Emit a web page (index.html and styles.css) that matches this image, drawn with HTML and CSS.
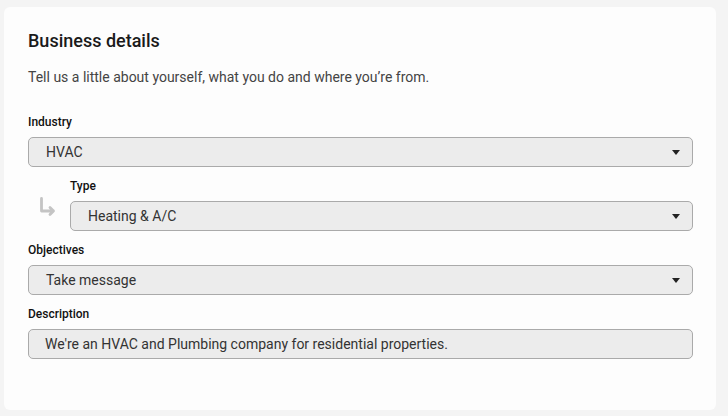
FILE: index.html
```html
<!DOCTYPE html>
<html lang="en">
<head>
    <meta charset="UTF-8">
    <meta name="viewport" content="width=device-width, initial-scale=1.0">
    <title>Business details</title>
    <link rel="stylesheet" href="styles.css">
</head>
<body>
    <div class="card">
        <h2>Business details</h2>
        <p class="intro">Tell us a little about yourself, what you do and where you’re from.</p>

        <div class="field">
            <label>Industry</label>
            <div class="select">HVAC <span class="caret"></span></div>
        </div>

        <div class="sub-row">
            <div class="sub-icon">
                <svg width="18" height="22" viewBox="0 0 18 22">
                    <path d="M3.5 1.5 V14 H15.5 M12 10.5 L15.5 14 L12 17.5" fill="none" stroke="#c4c4c4" stroke-width="2.8" stroke-linecap="round" stroke-linejoin="round"/>
                </svg>
            </div>
            <div class="field">
                <label>Type</label>
                <div class="select">Heating &amp; A/C <span class="caret"></span></div>
            </div>
        </div>

        <div class="field">
            <label>Objectives</label>
            <div class="select">Take message <span class="caret"></span></div>
        </div>

        <div class="field">
            <label>Description</label>
            <div class="select text">We're an HVAC and Plumbing company for residential properties.</div>
        </div>
    </div>
</body>
</html>
```

FILE: styles.css
```css
body {
    margin: 7px 12px 0 4px;
    background-color: #f4f4f4;
    font-family: 'Roboto', 'Liberation Sans', sans-serif;
    color: #222;
}

.card {
    background-color: #fdfdfd;
    border-radius: 6px;
    padding: 22px 23px 51px 24px;
}

.card h2 {
    margin: 0;
    font-size: 18px;
    line-height: 24px;
    font-weight: 500;
    color: #1a1a1a;
}

.intro {
    margin: 14px 0 27px;
    font-size: 14px;
    line-height: 20px;
    color: #444;
}

.field {
    display: flex;
    flex-direction: column;
    flex: 1;
}

.field + .field,
.sub-row + .field,
.field + .sub-row {
    margin-top: 11px;
}

.field label {
    font-size: 12px;
    line-height: 16px;
    font-weight: 500;
    color: #111;
    margin-bottom: 7px;
}

.select {
    position: relative;
    height: 28px;
    display: flex;
    align-items: center;
    padding: 0 18px 0 17px;
    background-color: #ececec;
    border: 1px solid #aaa;
    border-radius: 5px;
    font-size: 14px;
    color: #333;
}

.select.text {
    padding-left: 16px;
}

.caret {
    position: absolute;
    right: 12px;
    top: 12px;
    width: 0;
    height: 0;
    border-left: 4.5px solid transparent;
    border-right: 4.5px solid transparent;
    border-top: 5px solid #222;
}

.sub-row {
    display: flex;
}

.sub-icon {
    width: 42px;
    display: flex;
    align-items: flex-end;
    padding-bottom: 12px;
    padding-left: 10px;
    box-sizing: border-box;
}
```
